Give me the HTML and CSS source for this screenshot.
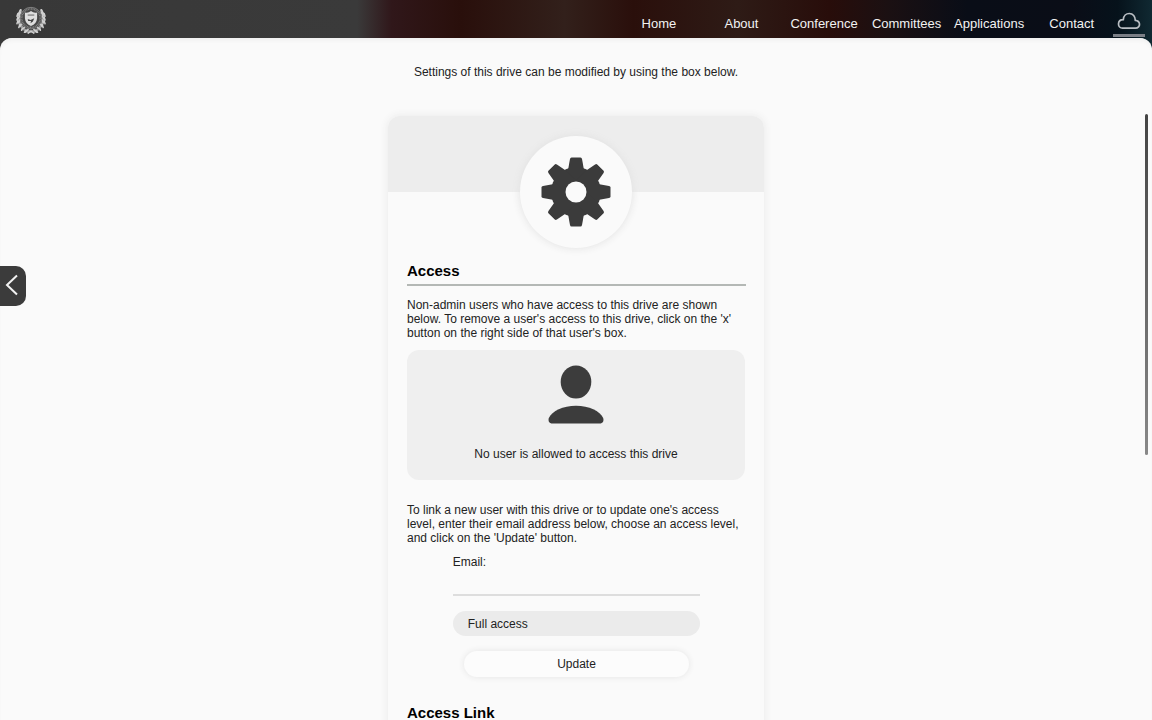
FILE: index.html
```html
<!DOCTYPE html>
<html lang="en">
<head>
<meta charset="utf-8">
<title>Drive settings</title>
<link rel="stylesheet" href="styles.css">
</head>
<body>
<header class="topbar">
  <a class="logo" href="#" aria-label="Home page">
    <svg viewBox="0 0 34 32" width="34" height="30">
      <g fill="none" stroke="#b4b4b4" stroke-linecap="round">
        <path d="M6 6Q1 16 7 23T16 28" stroke-width="3" stroke="#999"/>
        <path d="M28 6Q33 16 27 23T18 28" stroke-width="3" stroke="#999"/>
        <path d="M6 5L4 9M3 9L2 12M3 13L2 16M3 17L2 20M5 21L4 24M8 25L7 27M12 27L10 29M6 8L4 11M5 12L3 15M5 16L4 19M7 20L5 23M10 24L7 26M14 26L11 29M17 28L20 30M28 5L30 9M31 9L32 12M31 13L32 16M31 17L32 20M29 21L30 24M26 25L27 27M22 27L24 29M28 8L30 11M29 12L31 15M29 16L30 19M27 20L29 23M24 24L27 26M20 26L23 29M17 28L14 30" stroke-width="1.600" stroke="#d0d0d0"/>
      </g>
      <circle cx="17" cy="14" r="11.500" fill="#484848" stroke="#858585"/>
      <circle cx="17" cy="14" r="9.800" fill="none" stroke="#868686" stroke-width="1.600" stroke-dasharray="1 .7"/>
      <path d="M10.500 8Q14 9 17 6.500Q20 9 23.500 8V14Q23 20 17 22.500Q11 20 10.500 14Z" fill="#dedede"/>
      <path d="M13.500 10H20.500V11.500H13.500Z" fill="#888"/>
      <path d="M13.500 15L16.500 16L20.500 14L19 17.500L16.500 19.500L17 17L14 17Z" fill="#444"/>
    </svg>
  </a>
  <nav class="nav" aria-label="Main">
    <a href="#">Home</a>
    <a href="#">About</a>
    <a href="#">Conference</a>
    <a href="#">Committees</a>
    <a href="#">Applications</a>
    <a href="#">Contact</a>
  </nav>
  <a class="cloud" href="#" aria-label="Drive" aria-current="page">
    <svg viewBox="0 0 24 18" width="24" height="18">
      <path d="M5.500 16.200H18.500C21 16.200 22.700 14.200 22.500 12C22.300 9.800 20.500 8.500 18.300 8.300C18.300 4.500 16 1.500 12.300 1.500C9.100 1.500 6.600 3.900 6.300 7.600C3.500 7.600 1.500 9.400 1.500 12C1.500 14.400 3.200 16.200 5.500 16.200Z" fill="none" stroke="#b9bec3" stroke-width="1.700"/>
    </svg>
  </a>
</header>
<main class="page">
  <p class="intro">Settings of this drive can be modified by using the box below.</p>
  <section class="card">
    <div class="card-head">
      <div class="badge">
        <svg viewBox="-35 -35 70 70" width="70" height="70">
          <g fill="#3b3b3b">
            <circle r="25"/>
            <path id="tooth" d="M-8 -22L-6 -33Q-5.700 -34.500 -4.500 -34.500H4.500Q5.700 -34.500 6 -33L8 -22L8 22L6 33Q5.700 34.500 4.500 34.500H-4.500Q-5.700 34.500 -6 33L-8 22Z"/>
            <use href="#tooth" transform="rotate(45)"/>
            <use href="#tooth" transform="rotate(90)"/>
            <use href="#tooth" transform="rotate(135)"/>
          </g>
          <circle r="10.500" fill="#fafafa"/>
        </svg>
      </div>
    </div>
    <div class="card-body">
      <h2>Access</h2>
      <p>Non-admin users who have access to this drive are shown below. To remove a user's access to this drive, click on the 'x' button on the right side of that user's box.</p>
      <div class="empty">
        <svg viewBox="0 0 56 60" width="56" height="60">
          <g fill="#3c3c3c">
            <ellipse cx="28" cy="17" rx="15.300" ry="16.500"/>
            <path d="M4.500 58.500C1 58.500 0 56 0.800 53C4 46 15 40.700 28 40.700S52 46 55.200 53C56 56 55 58.500 51.500 58.500Z"/>
          </g>
        </svg>
        <span>No user is allowed to access this drive</span>
      </div>
      <p>To link a new user with this drive or to update one's access level, enter their email address below, choose an access level, and click on the 'Update' button.</p>
      <form class="form">
        <label for="email">Email:</label>
        <input id="email" type="email">
        <select aria-label="Access level"><option>Full access</option></select>
        <button type="button">Update</button>
      </form>
      <h2>Access Link</h2>
    </div>
  </section>
</main>
<button class="back" type="button" aria-label="Back">
  <svg viewBox="0 0 14 22" width="14" height="22"><path d="M12 1.500L2 11L12 20.500" fill="none" stroke="#f2f2f2" stroke-width="2"/></svg>
</button>
<div class="scroll-thumb"></div>
</body>
</html>
```
FILE: styles.css
```css
* { box-sizing: border-box; }

body {
  margin: 0;
  height: 100vh;
  display: flex;
  flex-direction: column;
  overflow: hidden;
  font: 12px/14px "Liberation Sans", Arial, sans-serif;
  color: #222;
  background: linear-gradient(90deg, #383838 0, #3a3a3a 31%, #30171a 34%, #290f0b 40%, #32201b 49%, #2a0f0b 55%, #2e1b16 64%, #280d0a 72%, #1b1012 77%, #090d17 84%, #0a0d17 93%, #06121b 97%, #102932 100%);
}

p, h2 { margin: 0; }

.topbar {
  display: flex;
  align-items: stretch;
  height: 38px;
  padding: 0 7px 0 14px;
}

.logo { padding-top: 5px; margin-right: auto; }
.logo svg { display: block; }

.nav {
  display: grid;
  grid-template-columns: repeat(6, 1fr);
  width: 43vw;
  padding-top: 16px;
}

.nav a {
  color: #f2f2f2;
  font-size: 13px;
  line-height: 16px;
  text-align: center;
  text-decoration: none;
}

.cloud {
  width: 32px;
  height: 37px;
  padding-top: 12px;
  text-align: center;
  border-bottom: 3px solid #7b7f86;
}
.cloud svg { display: block; margin: 0 auto; }

.page {
  flex: 1;
  min-height: 0;
  overflow: hidden;
  padding-top: 27px;
  border-radius: 12px 12px 0 0;
  background: #fafafa;
  box-shadow: inset 0 4px 4px -2px #eee;
}

.intro { text-align: center; }

.card {
  width: 376px;
  max-width: 100%;
  margin: 37px auto 0;
  border-radius: 12px;
  box-shadow: 0 0 8px #e8e8e8;
}

.card-head {
  display: flex;
  justify-content: center;
  height: 76px;
  padding-top: 20px;
  border-radius: 12px 12px 0 0;
  background: #ededed;
}

.badge {
  display: grid;
  place-items: center;
  flex: none;
  width: 112px;
  height: 112px;
  border-radius: 50%;
  background: #fafafa;
  box-shadow: 0 0 8px #e0e0e0;
}

.card-body { padding: 70px 18px 24px 19px; }

h2 {
  padding-bottom: 4px;
  margin-bottom: 12px;
  border-bottom: 2px solid #b4b8b5;
  color: #000;
  font-size: 15px;
  line-height: 18px;
}

.empty {
  display: flex;
  flex-direction: column;
  align-items: center;
  gap: 22px;
  height: 130px;
  margin: 10px 1px 23px 0;
  padding-top: 15px;
  border-radius: 12px;
  background: #efefef;
}

.form {
  display: flex;
  flex-direction: column;
  width: 73%;
  margin: 10px auto 27px;
}

.form input,
.form select,
.form button {
  font: inherit;
  color: #222;
  border: 0;
  outline: 0;
}

.form input {
  width: 100%;
  height: 27px;
  padding: 0;
  border-bottom: 2px solid #ddd;
  background: transparent;
}

.form select {
  appearance: none;
  height: 25px;
  margin-top: 15px;
  padding: 0 15px;
  border-radius: 13px;
  background: #ebebeb;
}

.form button {
  height: 26px;
  margin: 15px 11px 0;
  border-radius: 13px;
  background: #fcfcfc;
  box-shadow: 0 0 6px #e4e4e4;
}

.back {
  position: fixed;
  left: 0;
  top: 266px;
  display: flex;
  align-items: center;
  width: 26px;
  height: 40px;
  padding: 0 0 2px 5px;
  border: 0;
  border-radius: 0 10px 10px 0;
  background: #3b3b3b;
}

.scroll-thumb {
  position: fixed;
  right: 4px;
  top: 114px;
  width: 3px;
  height: 341px;
  border-radius: 2px;
  background: linear-gradient(#444, #888);
}
```
